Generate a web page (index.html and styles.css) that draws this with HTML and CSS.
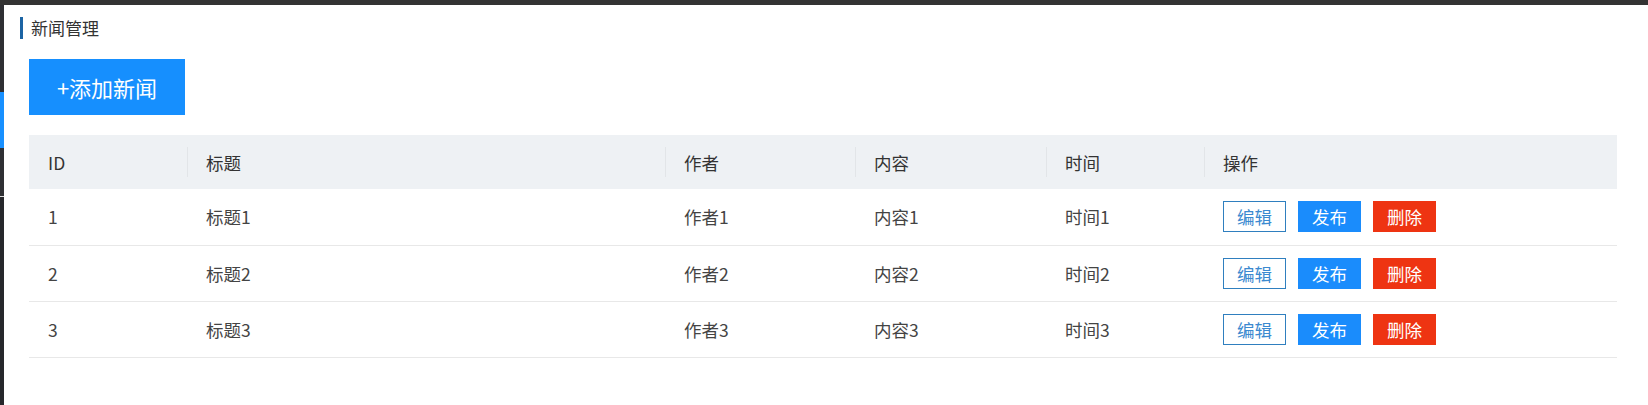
FILE: index.html
```html
<!DOCTYPE html>
<html lang="zh-CN">
<head>
    <meta charset="UTF-8">
    <title>新闻管理</title>
    <link rel="stylesheet" href="styles.css">
</head>
<body>
<div class="topbar"></div>
<div class="layout">
    <div class="sidebar">
        <div class="menu-item"></div>
        <div class="menu-item active"></div>
        <div class="menu-item split"></div>
        <div class="menu-rest"></div>
    </div>
    <div class="main">
        <div class="title">新闻管理</div>
        <div class="panel">
            <div class="addBtn">+添加新闻</div>
            <table class="list">
                <colgroup>
                    <col style="width:158px">
                    <col style="width:478px">
                    <col style="width:190px">
                    <col style="width:191px">
                    <col style="width:158px">
                    <col>
                </colgroup>
                <thead>
                <tr>
                    <th>ID</th>
                    <th>标题</th>
                    <th>作者</th>
                    <th>内容</th>
                    <th>时间</th>
                    <th>操作</th>
                </tr>
                </thead>
                <tbody>
                <tr>
                    <td>1</td>
                    <td>标题1</td>
                    <td>作者1</td>
                    <td>内容1</td>
                    <td>时间1</td>
                    <td><div class="ops"><span class="btn edit">编辑</span><span class="btn publish">发布</span><span class="btn delete">删除</span></div></td>
                </tr>
                <tr>
                    <td>2</td>
                    <td>标题2</td>
                    <td>作者2</td>
                    <td>内容2</td>
                    <td>时间2</td>
                    <td><div class="ops"><span class="btn edit">编辑</span><span class="btn publish">发布</span><span class="btn delete">删除</span></div></td>
                </tr>
                <tr>
                    <td>3</td>
                    <td>标题3</td>
                    <td>作者3</td>
                    <td>内容3</td>
                    <td>时间3</td>
                    <td><div class="ops"><span class="btn edit">编辑</span><span class="btn publish">发布</span><span class="btn delete">删除</span></div></td>
                </tr>
                </tbody>
            </table>
        </div>
    </div>
</div>
</body>
</html>
```

FILE: styles.css
```css
*{
    margin: 0;
    padding: 0;
    box-sizing: border-box;
}
html, body{
    height: 100%;
}
body{
    background: #fff;
    color: #333;
    font-family: "Microsoft YaHei", "Noto Sans CJK SC", "Noto Sans", sans-serif;
    font-size: 17.5px;
    overflow: hidden;
}
.topbar{
    height: 5px;
    background: #333;
}
.layout{
    display: flex;
    height: calc(100% - 5px);
}
.sidebar{
    width: 4px;
    flex-shrink: 0;
    display: flex;
    flex-direction: column;
    background: #2e2f33;
}
.menu-item{
    height: 87px;
}
.menu-item.active{
    height: 56px;
    background: #1890ff;
}
.menu-item.split{
    height: 49px;
    border-bottom: 1px solid #ddd;
}
.menu-rest{
    flex: 1;
    background: #26272b;
}
.main{
    flex: 1;
    padding: 12px 31px 0 16px;
}
.title{
    height: 22px;
    line-height: 22px;
    padding-left: 8px;
    border-left: 3px solid #1c64a4;
    font-size: 17px;
    color: #333;
}
.panel{
    padding-left: 9px;
}
.addBtn{
    width: 156px;
    height: 56px;
    margin-top: 20px;
    background: #168ffe;
    color: #fff;
    font-size: 22px;
    line-height: 56px;
    text-align: center;
}
.list{
    width: 100%;
    margin-top: 20px;
    border-collapse: collapse;
    table-layout: fixed;
}
.list th{
    position: relative;
    height: 54px;
    padding-left: 19px;
    background: #eef1f4;
    font-weight: normal;
    text-align: left;
    color: #333;
}
.list th + th::before{
    content: "";
    position: absolute;
    left: 0;
    top: 50%;
    width: 1px;
    height: 30px;
    margin-top: -15px;
    background: #e2e5e8;
}
.list td{
    height: 56px;
    padding-left: 19px;
    border-bottom: 1px solid #e8e8e8;
    color: #444;
}
.ops{
    display: flex;
    gap: 12px;
}
.btn{
    width: 63px;
    height: 31px;
    line-height: 29px;
    text-align: center;
    border: 1px solid transparent;
    color: #fff;
}
.btn.edit{
    border-color: #2f7fbf;
    color: #3b8ad0;
}
.btn.publish{
    background: #1a8cfc;
    border-color: #1a8cfc;
}
.btn.delete{
    background: #ee3412;
    border-color: #ee3412;
}
```
